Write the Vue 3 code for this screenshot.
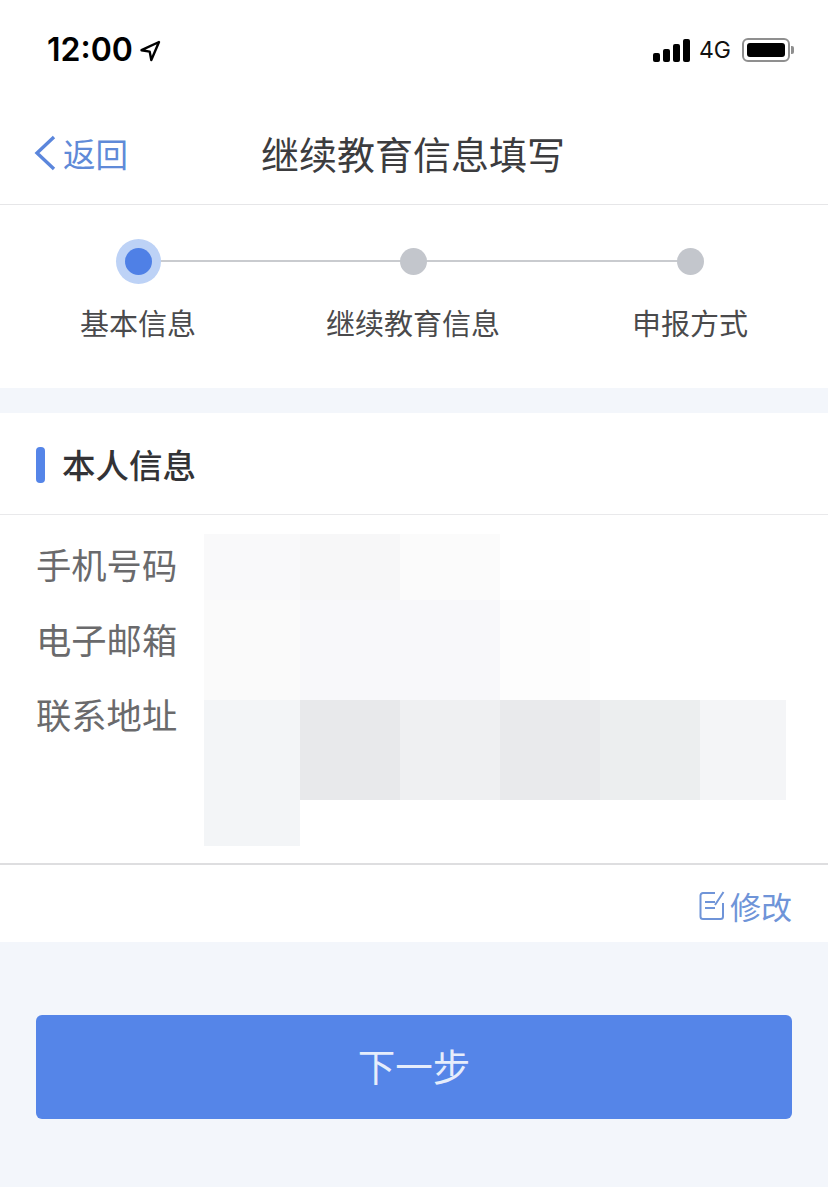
<script setup>
const steps = [
  { label: '基本信息', active: true },
  { label: '继续教育信息', active: false },
  { label: '申报方式', active: false }
]
const fields = ['手机号码', '电子邮箱', '联系地址']
const mosaic = [
  { h: 66, cells: [[96, '#f9f9fa'], [100, '#f7f7f8'], [100, '#fbfbfb']] },
  { h: 100, cells: [[96, '#fafafa'], [100, '#f8f8fa'], [100, '#f8f8fa'], [90, '#fdfdfd']] },
  { h: 100, cells: [[96, '#f3f5f7'], [100, '#e8e9eb'], [100, '#eff0f2'], [100, '#e9eaec'], [100, '#eceeef'], [86, '#f4f5f7']] },
  { h: 46, cells: [[96, '#f3f5f7']] }
]
</script>

<template>
  <div class="page">
    <div class="status">
      <div class="time">
        <span>12:00</span>
        <svg class="loc" width="22" height="22" viewBox="0 0 22 22"><path d="M20 2 2.500 10.200l8.200 1.400 1.600 8.400z" fill="none" stroke="#000" stroke-width="2.400" stroke-linejoin="round"/></svg>
      </div>
      <div class="indicators">
        <div class="signal"><i class="b1"></i><i class="b2"></i><i class="b3"></i><i class="b4"></i></div>
        <span class="net">4G</span>
        <div class="battery"><div class="fill"></div></div>
        <div class="nub"></div>
      </div>
    </div>

    <header class="nav">
      <div class="back">
        <svg width="24" height="36" viewBox="0 0 24 36"><path d="M21 2 4 18l17 16" fill="none" stroke="#5b86dc" stroke-width="3.400"/></svg>
        <span>返回</span>
      </div>
      <h1>继续教育信息填写</h1>
    </header>

    <section class="stepper">
      <div class="track">
        <div v-for="s in steps" :key="s.label" class="step">
          <span class="dot-wrap"><span class="dot" :class="{ on: s.active }"></span></span>
          <span class="label">{{ s.label }}</span>
        </div>
        <div class="line"></div>
      </div>
    </section>

    <section class="card">
      <div class="card-title"><i class="mark"></i><h2>本人信息</h2></div>
      <div class="info">
        <div class="labels">
          <div v-for="f in fields" :key="f" class="field">{{ f }}</div>
        </div>
        <div class="mosaic">
          <div v-for="(r, i) in mosaic" :key="i" class="m-row" :style="{ height: r.h + 'px' }">
            <div v-for="(c, j) in r.cells" :key="j" :style="{ width: c[0] + 'px', background: c[1] }"></div>
          </div>
        </div>
      </div>
      <div class="foot">
        <svg width="26" height="30" viewBox="0 0 26 30" fill="none" stroke="#6f94d8" stroke-width="2"><path d="M16 3H4a2.500 2.500 0 0 0-2.500 2.500v21A2.500 2.500 0 0 0 4 29h17.500a2.500 2.500 0 0 0 2.500-2.500V13"/><path d="M6 12h10M6 18h10M24.500 2 16 15"/></svg>
        <span>修改</span>
      </div>
    </section>

    <button class="next">下一步</button>
  </div>
</template>

<style>
body { margin: 0; background: #f3f6fb; }
</style>

<style scoped>
.page {
  width: 828px;
  height: 1187px;
  overflow: hidden;
  background: #f3f6fb;
  font-family: "Noto Sans CJK SC", "Noto Sans", sans-serif;
}
.status {
  height: 100px;
  box-sizing: border-box;
  padding: 32px 34px 0 47px;
  background: #fff;
  display: flex;
  justify-content: space-between;
  align-items: flex-start;
}
.time {
  display: flex;
  align-items: center;
  gap: 6px;
  font: 600 32px/36px Inter, sans-serif;
  color: #000;
}
.loc { margin-top: 1px; }
.indicators { display: flex; align-items: center; height: 36px; }
.signal { display: flex; align-items: flex-end; gap: 3px; height: 24px; }
.signal i { width: 7px; background: #000; border-radius: 2px; }
.b1 { height: 9px; }
.b2 { height: 13px; }
.b3 { height: 18px; }
.b4 { height: 23px; }
.net { font: 400 23px/36px Inter, sans-serif; color: #111; margin: 0 11px 0 9px; }
.battery {
  width: 48px;
  height: 24px;
  box-sizing: border-box;
  border: 2px solid #8f8f8f;
  border-radius: 6px;
  padding: 3px;
}
.fill { width: 100%; height: 100%; background: #000; border-radius: 3px; }
.nub { width: 3px; height: 8px; background: #8f8f8f; border-radius: 0 2px 2px 0; margin-left: 1px; }

.nav {
  height: 105px;
  box-sizing: border-box;
  background: #fff;
  border-bottom: 1px solid #e6e6e8;
  display: flex;
  align-items: center;
  padding: 7px 0 5px 33px;
}
.back { display: flex; align-items: center; gap: 6px; color: #5f8ad8; font-size: 32.500px; line-height: 44px; }
.nav h1 {
  margin: 0 0 0 133px;
  font-size: 38px;
  font-weight: 400;
  line-height: 50px;
  color: #3c3c3e;
}

.stepper { height: 183px; background: #fff; box-sizing: border-box; padding-top: 33px; }
.track { position: relative; display: flex; padding-left: 80px; }
.step { display: flex; flex-direction: column; align-items: center; position: relative; z-index: 1; }
.step:nth-child(2) { margin-left: 130px; }
.step:nth-child(3) { margin-left: 132px; }
.dot-wrap { width: 46px; height: 46px; display: flex; align-items: center; justify-content: center; }
.dot { width: 27px; height: 27px; border-radius: 50%; background: #c3c6cc; }
.dot.on { background: #4f80e6; box-shadow: 0 0 0 9px #bdd2f6; }
.label { margin-top: 18px; font-size: 29px; line-height: 40px; color: #4a4a4c; white-space: nowrap; }
.line { position: absolute; left: 138px; width: 552px; top: 22px; height: 2px; background: #c9cbcf; }

.card { margin-top: 25px; background: #fff; }
.card-title {
  height: 102px;
  box-sizing: border-box;
  border-bottom: 1px solid #e9e9eb;
  display: flex;
  align-items: center;
  padding: 0 0 0 36px;
}
.mark { width: 9px; height: 36px; border-radius: 4px; background: #5585e8; margin-top: 2px; }
.card-title h2 { margin: 0 0 0 17px; font-size: 33.500px; line-height: 44px; font-weight: 500; color: #333336; }
.info { height: 350px; box-sizing: border-box; border-bottom: 2px solid #dedee0; display: flex; }
.labels { width: 204px; box-sizing: border-box; padding: 11px 0 0 36px; }
.field { height: 75px; line-height: 75px; font-size: 35.300px; color: #6a6a6c; white-space: nowrap; }
.mosaic { padding-top: 19px; }
.m-row { display: flex; }
.foot {
  height: 77px;
  box-sizing: border-box;
  padding: 3px 36px 0 0;
  display: flex;
  align-items: center;
  justify-content: flex-end;
  gap: 5px;
  color: #6f94d8;
  font-size: 31px;
}
.next {
  display: block;
  margin: 73px 36px 0;
  width: 756px;
  height: 104px;
  padding: 0 0 5px;
  border: 0;
  border-radius: 6px;
  background: #5585e8;
  color: #e6edfb;
  font-family: inherit;
  font-size: 37.500px;
}
</style>
